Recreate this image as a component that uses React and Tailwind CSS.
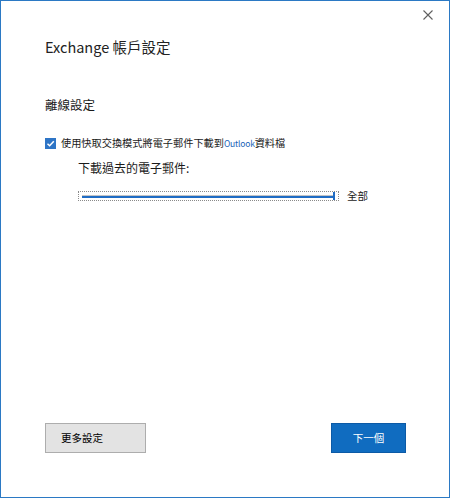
import React from 'react';

export default function App() {
  return (
    <div className="w-[450px] h-[498px] bg-white border border-[#2b79c4] flex flex-col pl-[44px] pb-[44px] font-['Noto_Sans_CJK_TC',sans-serif] text-[#1a1a1a]">
      {/* Close */}
      <div className="h-[29px] flex justify-end items-start pt-[9px] pr-[16px]">
        <svg width="10" height="10" viewBox="0 0 10 10" className="block">
          <path d="M0.5 0.5 L9.5 9.5 M9.5 0.5 L0.5 9.5" stroke="#5f5f5f" strokeWidth="1.1" fill="none" />
        </svg>
      </div>

      {/* Title */}
      <h1 className="mt-[7px] text-[14.5px] leading-[20px] font-normal text-[#222]">Exchange 帳戶設定</h1>

      {/* Section */}
      <h2 className="mt-[39px] text-[12.5px] leading-[18px] font-normal">離線設定</h2>

      {/* Checkbox */}
      <div className="mt-[21px] h-[16px] flex items-center gap-[5px]">
        <span className="w-[11px] h-[11px] bg-[#2e75c6] flex items-center justify-center">
          <svg width="9" height="9" viewBox="0 0 9 9">
            <path d="M1.5 4.8 L3.6 6.8 L7.8 2.2" stroke="#fff" strokeWidth="1.5" fill="none" />
          </svg>
        </span>
        <span className="text-[10.2px] leading-[16px] whitespace-nowrap">
          使用快取交換模式將電子郵件下載到<span className="text-[8.5px] tracking-[-0.2px] text-[#2064b8]">Outlook</span>資料檔
        </span>
      </div>

      {/* Download label */}
      <div className="mt-[9px] ml-[33px] text-[12px] leading-[16px] whitespace-nowrap">下載過去的電子郵件:</div>

      {/* Slider */}
      <div className="mt-[13px] ml-[33px] h-[14px] flex items-center">
        <div className="w-[261px] h-[10px] border border-dotted border-[#8a8a8a] flex items-center pl-[3px] pr-[3px]">
          <div className="flex-1 flex flex-col">
            <div className="h-px bg-[#c4c4c4]" />
            <div className="h-[2px] bg-[#1f6cc4]" />
          </div>
          <div className="w-[2px] h-[8px] bg-[#1f6cc4]" />
        </div>
        <span className="ml-[8px] text-[10.5px] leading-[14px]">全部</span>
      </div>

      {/* Buttons */}
      <div className="mt-auto flex justify-between pr-[43px]">
        <button className="w-[101px] h-[30px] bg-[#e3e3e3] border border-[#adadad] text-left pl-[15px] text-[10.5px] text-black">
          更多設定
        </button>
        <button className="w-[75px] h-[30px] bg-[#106cc0] border border-[#0c5aa6] text-[10.5px] text-white">
          下一個
        </button>
      </div>
    </div>
  );
}
